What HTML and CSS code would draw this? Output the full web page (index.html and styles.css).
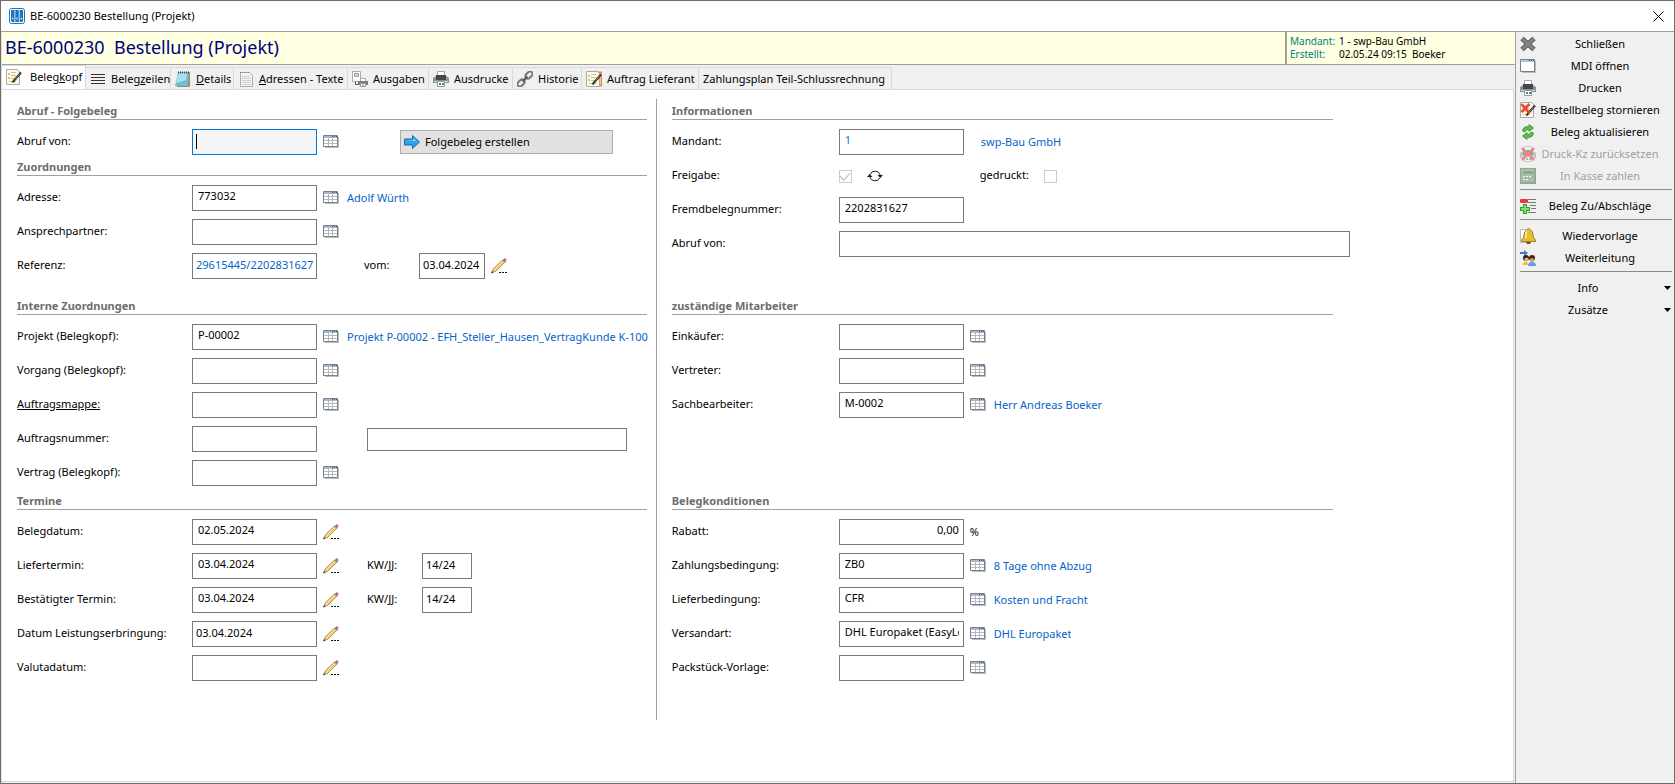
FILE: index.html
```
<!DOCTYPE html>
<html lang="de">
<head>
  <meta charset="UTF-8">
  <meta name="viewport" content="width=device-width, initial-scale=1.0">
  <title>BE-6000230 Bestellung (Projekt)</title>
  <link rel="stylesheet" href="styles.css">
</head>
<body>
  <!-- Symbole -->
  <svg class="symbols" aria-hidden="true">
    <symbol id="i-table" viewBox="0 0 16 14">
      <path d="M2 2h14v11H2z" fill="#b9bcc0"/>
      <path d="M.5.5h14v11H.5z" fill="#fff" stroke="#788088"/>
      <path d="M1 1h13v2H1z" fill="#a9b8cf"/>
      <path d="M9 1h1v1H9zM11 1h1v1h-1zM13 1h1v1h-1z" fill="#46536b"/>
      <path d="M1 5.500h13M1 8.500h13M5.500 3v8M9.500 3v8" stroke="#b5b9be"/>
    </symbol>
    <symbol id="i-pencil" viewBox="0 0 16 16">
      <path d="M1 14.500l1.200-3.500L11.500 2l2.300 2.300L4.500 13.500z" fill="#f0cf72" stroke="#8a6a3a" stroke-width=".7"/>
      <path d="M3 12L12 3.200" stroke="#fff0a8" stroke-width=".8"/>
      <path d="M11.300 2.200l1-1 2.500 2.500-1 1z" fill="#5f9276"/>
      <path d="M12.300 1.200l.9-.8q.6-.4 1.200.2l.9.900q.5.600 0 1.100l-.8.900z" fill="#cf5a60"/>
      <path d="M0 15.500l1-2.500 1.500 1.500z" fill="#333"/>
      <path d="M8 14h2v1H8zM11 14h2v1h-2zM14 14h2v1h-2z" fill="#111"/>
    </symbol>
    <symbol id="i-print" viewBox="0 0 16 16">
      <path d="M4.500.5h7v6h-7z" fill="#fff" stroke="#a5a5a5"/>
      <path d="M0 7l3-2h10l3 2v5H0z" fill="#8d9195"/>
      <path d="M3 4h10v5H3z" fill="#44484c"/>
      <path d="M1 10h14v1H1z" fill="#d5d8da"/>
      <path d="M4.500 10.500h7v5h-7z" fill="#fff" stroke="#999"/>
      <path d="M6 12h2v2H6z" fill="#2c86c5"/><path d="M9 12h2v2H9z" fill="#3a9a63"/>
    </symbol>
    <symbol id="i-note" viewBox="0 0 16 16">
      <path d="M.5.500h11l2 2v13H.5z" fill="#fbfaf1" stroke="#aaa"/>
      <path d="M2 4h2v2H2zM5 3h5v1H5zM5 6h5v1H5zM2 8h2v2H2zM5 9h4v1H5zM3 12h7v1H3z" fill="#d9c45d"/>
      <path d="M15 3.500L8.500 11l-2 2.500" fill="none" stroke="#2b2b2b" stroke-width="2"/>
      <path d="M14 4.500L9 10.300" stroke="#999" stroke-width=".7"/>
    </symbol>
  </svg>

  <div class="window">
    <header class="titlebar">
      <svg class="app-icon" viewBox="0 0 16 16"><rect x=".5" y=".5" width="15" height="15" rx="2" fill="#fff" stroke="#1c75bc"/><path d="M2 2h3.500v12H3l-1-1zM6.300 2h3.500v12H6.300zM10.600 2H14v11l-1 1h-2.400z" fill="#1c75bc"/><path d="M3.700 9.500v2M8 9.500v2M12.300 9.500v2" stroke="#fff"/></svg>
      <span>BE-6000230 Bestellung (Projekt)</span>
      <button type="button" class="close" aria-label="Fenster schließen"><svg viewBox="0 0 11 11"><path d="M.5.5l10 10M10.500.5l-10 10" stroke="#000" fill="none"/></svg></button>
    </header>

    <div class="workspace">
      <main class="main">
        <div class="doc-head">
          <h1>BE-6000230&nbsp; Bestellung (Projekt)</h1>
          <dl>
            <dt>Mandant:</dt><dd>1 - swp-Bau GmbH</dd>
            <dt>Erstellt:</dt><dd>02.05.24 09:15&nbsp; Boeker</dd>
          </dl>
        </div>

        <nav class="tabs">
          <button type="button" class="tab active"><svg class="icon"><use href="#i-note"/></svg><span>Beleg<u>k</u>opf</span></button>
          <button type="button" class="tab tab-zeilen"><svg class="icon" viewBox="0 0 16 16"><path d="M1 3.500h14M1 6.500h14M1 9.500h14M1 12.500h14" stroke="#333"/></svg><span>Beleg<u>z</u>eilen</span></button>
          <button type="button" class="tab tab-details"><svg class="icon" viewBox="0 0 16 16"><path d="M3 1h12v14l-1 1H2z" fill="#9a8d6b"/><path d="M3 1h11l-1 14H0z" fill="#6fc0cf"/><path d="M3 2h9l-1 7L1 12z" fill="#aee0e8"/><path d="M3 1.500h11" stroke="#445" stroke-dasharray="1 1" stroke-width="2"/></svg><span><u>D</u>etails</span></button>
          <button type="button" class="tab tab-adressen"><svg class="icon" viewBox="0 0 16 16"><path d="M2.500 1.500h9l3 3v11h-12z" fill="#f6f6f6" stroke="#aaa"/><path d="M4 5.500h8M4 7.500h9M4 9.500h9M4 11.500h9M4 13.500h9" stroke="#ccc"/><path d="M2 1.500h10" stroke="#888" stroke-dasharray="1 1"/></svg><span><u>A</u>dressen - Texte</span></button>
          <button type="button" class="tab tab-ausgaben"><svg class="icon" viewBox="0 0 16 16"><path d="M.5.5h8v10h-8z" fill="#fff" stroke="#aaa"/><path d="M2.500 2.500h4v3h-4z" fill="#c9dcf0" stroke="#8a9fb5"/><path d="M3.500 11v2.500H6" fill="none" stroke="#555"/><path d="M8.500 7.500h5v3h-5z" fill="#fff" stroke="#aaa"/><path d="M6 10h10v4H6z" fill="#777c80"/><path d="M8.500 12.500h5v3h-5z" fill="#fff" stroke="#999"/><path d="M10 13.500h2v1h-2z" fill="#2c86c5"/></svg><span>Ausgaben</span></button>
          <button type="button" class="tab tab-ausdrucke"><svg class="icon"><use href="#i-print"/></svg><span>Ausdrucke</span></button>
          <button type="button" class="tab tab-historie"><svg class="icon" viewBox="0 0 16 16" fill="none" stroke="#777" stroke-width="2"><rect x="8" y="1.500" width="8" height="5" rx="2.500" transform="rotate(-45 12 4)"/><rect x="0" y="9.500" width="8" height="5" rx="2.500" transform="rotate(-45 4 12)"/><path d="M5.500 10.500l5-5" stroke="#555"/></svg><span>Historie</span></button>
          <button type="button" class="tab tab-auftrag"><svg class="icon" viewBox="0 0 16 16"><path d="M9 1.500h6.500v13H9" fill="#fff" stroke="#e98c32" stroke-width="2"/><use href="#i-note"/></svg><span>Auftrag Lieferant</span></button>
          <button type="button" class="tab tab-plan"><span>Zahlungsplan Teil-Schlussrechnung</span></button>
        </nav>

        <form class="form">
          <div class="cell left top">
            <h2>Abruf - Folgebeleg</h2>
            <div class="rows">
              <div class="row">
                <label for="abruf">Abruf von:</label>
                <input type="text" id="abruf" class="field focus">
                <button type="button" class="pick" aria-label="Abruf wählen"><svg><use href="#i-table"/></svg></button>
                <button type="button" class="action"><svg class="icon" viewBox="0 0 16 16"><path d="M.5 5h8V1.500L15.500 8 8.500 14.500V11h-8z" fill="#2ba3ea" stroke="#1b6fae"/><path d="M1.500 6h8V4l3.500 3.500z" fill="#7fd0fa"/></svg>Folgebeleg erstellen</button>
              </div>
            </div>
            <h2>Zuordnungen</h2>
            <div class="rows">
              <div class="row">
                <label for="adresse">Adresse:</label>
                <input type="text" id="adresse" class="field" value="773032">
                <button type="button" class="pick" aria-label="Adresse wählen"><svg><use href="#i-table"/></svg></button>
                <a href="#">Adolf Würth</a>
              </div>
              <div class="row">
                <label for="ansprech">Ansprechpartner:</label>
                <input type="text" id="ansprech" class="field">
                <button type="button" class="pick" aria-label="Ansprechpartner wählen"><svg><use href="#i-table"/></svg></button>
              </div>
              <div class="row">
                <label for="referenz">Referenz:</label>
                <input type="text" id="referenz" class="field tight blue" value="29615445/2202831627">
                <label for="vom" class="sub sub-vom">vom:</label>
                <input type="text" id="vom" class="field tight date" value="03.04.2024">
                <button type="button" class="pick" aria-label="Datum ändern"><svg class="pencil"><use href="#i-pencil"/></svg></button>
              </div>
            </div>
          </div>

          <div class="cell right top">
            <h2>Informationen</h2>
            <div class="rows">
              <div class="row">
                <label for="mandant">Mandant:</label>
                <input type="text" id="mandant" class="field indigo" value="1">
                <a href="#" class="far">swp-Bau GmbH</a>
              </div>
              <div class="row">
                <label for="freigabe">Freigabe:</label>
                <input type="checkbox" id="freigabe" checked disabled>
                <button type="button" class="refresh" aria-label="Freigabe aktualisieren"><svg viewBox="0 0 16 14" fill="none" stroke="#222"><path d="M3 5.500A5.500 5.500 0 0 1 13.300 6M13 8.500A5.500 5.500 0 0 1 2.700 8"/><path d="M10.500 6h5.500l-2.700 3zM0 8h5.500L2.700 5z" fill="#222" stroke="none"/></svg></button>
                <label for="gedruckt" class="sub sub-gedruckt">gedruckt:</label>
                <input type="checkbox" id="gedruckt" disabled>
              </div>
              <div class="row">
                <label for="fremd">Fremdbelegnummer:</label>
                <input type="text" id="fremd" class="field" value="2202831627">
              </div>
              <div class="row">
                <label for="abruf2">Abruf von:</label>
                <input type="text" id="abruf2" class="field wide">
              </div>
            </div>
          </div>

          <div class="cell left middle">
            <h2>Interne Zuordnungen</h2>
            <div class="rows">
              <div class="row">
                <label for="projekt">Projekt (Belegkopf):</label>
                <input type="text" id="projekt" class="field" value="P-00002">
                <button type="button" class="pick" aria-label="Projekt wählen"><svg><use href="#i-table"/></svg></button>
                <a href="#">Projekt P-00002 - EFH_Steller_Hausen_VertragKunde K-100</a>
              </div>
              <div class="row">
                <label for="vorgang">Vorgang (Belegkopf):</label>
                <input type="text" id="vorgang" class="field">
                <button type="button" class="pick" aria-label="Vorgang wählen"><svg><use href="#i-table"/></svg></button>
              </div>
              <div class="row">
                <label for="mappe"><u>Auftragsmappe:</u></label>
                <input type="text" id="mappe" class="field">
                <button type="button" class="pick" aria-label="Auftragsmappe wählen"><svg><use href="#i-table"/></svg></button>
              </div>
              <div class="row">
                <label for="nummer">Auftragsnummer:</label>
                <input type="text" id="nummer" class="field">
                <input type="text" class="field extra" aria-label="Auftragsbezeichnung">
              </div>
              <div class="row">
                <label for="vertrag">Vertrag (Belegkopf):</label>
                <input type="text" id="vertrag" class="field">
                <button type="button" class="pick" aria-label="Vertrag wählen"><svg><use href="#i-table"/></svg></button>
              </div>
            </div>
          </div>

          <div class="cell right middle">
            <h2>zuständige Mitarbeiter</h2>
            <div class="rows">
              <div class="row">
                <label for="einkauf">Einkäufer:</label>
                <input type="text" id="einkauf" class="field">
                <button type="button" class="pick" aria-label="Einkäufer wählen"><svg><use href="#i-table"/></svg></button>
              </div>
              <div class="row">
                <label for="vertreter">Vertreter:</label>
                <input type="text" id="vertreter" class="field">
                <button type="button" class="pick" aria-label="Vertreter wählen"><svg><use href="#i-table"/></svg></button>
              </div>
              <div class="row">
                <label for="sachb">Sachbearbeiter:</label>
                <input type="text" id="sachb" class="field" value="M-0002">
                <button type="button" class="pick" aria-label="Sachbearbeiter wählen"><svg><use href="#i-table"/></svg></button>
                <a href="#">Herr Andreas Boeker</a>
              </div>
            </div>
          </div>

          <div class="cell left bottom">
            <h2>Termine</h2>
            <div class="rows">
              <div class="row">
                <label for="belegdatum">Belegdatum:</label>
                <input type="text" id="belegdatum" class="field" value="02.05.2024">
                <button type="button" class="pick" aria-label="Belegdatum ändern"><svg class="pencil"><use href="#i-pencil"/></svg></button>
              </div>
              <div class="row">
                <label for="liefer">Liefertermin:</label>
                <input type="text" id="liefer" class="field" value="03.04.2024">
                <button type="button" class="pick" aria-label="Liefertermin ändern"><svg class="pencil"><use href="#i-pencil"/></svg></button>
                <label for="kw1" class="sub sub-kw">KW/JJ:</label>
                <input type="text" id="kw1" class="field tight kw" value="14/24">
              </div>
              <div class="row">
                <label for="bestaetigt">Bestätigter Termin:</label>
                <input type="text" id="bestaetigt" class="field" value="03.04.2024">
                <button type="button" class="pick" aria-label="Bestätigten Termin ändern"><svg class="pencil"><use href="#i-pencil"/></svg></button>
                <label for="kw2" class="sub sub-kw">KW/JJ:</label>
                <input type="text" id="kw2" class="field tight kw" value="14/24">
              </div>
              <div class="row">
                <label for="leistung">Datum Leistungserbringung:</label>
                <input type="text" id="leistung" class="field tight" value="03.04.2024">
                <button type="button" class="pick" aria-label="Leistungsdatum ändern"><svg class="pencil"><use href="#i-pencil"/></svg></button>
              </div>
              <div class="row">
                <label for="valuta">Valutadatum:</label>
                <input type="text" id="valuta" class="field">
                <button type="button" class="pick" aria-label="Valutadatum ändern"><svg class="pencil"><use href="#i-pencil"/></svg></button>
              </div>
            </div>
          </div>

          <div class="cell right bottom">
            <h2>Belegkonditionen</h2>
            <div class="rows">
              <div class="row">
                <label for="rabatt">Rabatt:</label>
                <input type="text" id="rabatt" class="field number" value="0,00">
                <span class="unit">%</span>
              </div>
              <div class="row">
                <label for="zahlung">Zahlungsbedingung:</label>
                <input type="text" id="zahlung" class="field" value="ZB0">
                <button type="button" class="pick" aria-label="Zahlungsbedingung wählen"><svg><use href="#i-table"/></svg></button>
                <a href="#">8 Tage ohne Abzug</a>
              </div>
              <div class="row">
                <label for="lieferbed">Lieferbedingung:</label>
                <input type="text" id="lieferbed" class="field" value="CFR">
                <button type="button" class="pick" aria-label="Lieferbedingung wählen"><svg><use href="#i-table"/></svg></button>
                <a href="#">Kosten und Fracht</a>
              </div>
              <div class="row">
                <label for="versand">Versandart:</label>
                <input type="text" id="versand" class="field" value="DHL Europaket (EasyLog)">
                <button type="button" class="pick" aria-label="Versandart wählen"><svg><use href="#i-table"/></svg></button>
                <a href="#">DHL Europaket</a>
              </div>
              <div class="row">
                <label for="pack">Packstück-Vorlage:</label>
                <input type="text" id="pack" class="field">
                <button type="button" class="pick" aria-label="Packstück-Vorlage wählen"><svg><use href="#i-table"/></svg></button>
              </div>
            </div>
          </div>
        </form>
      </main>

      <aside class="sidebar">
        <button type="button"><svg class="icon" viewBox="0 0 16 16"><path d="M2 2.500l12 11M14 2.500l-12 11" stroke="#555" stroke-width="5"/><path d="M2 2.500l12 11M14 2.500l-12 11" stroke="#858585" stroke-width="3"/></svg><span>Schließen</span></button>
        <button type="button"><svg class="icon" viewBox="0 0 16 16"><path d="M2 3h14v12H2z" fill="#b9bcc0"/><path d="M.5 1.500h14v12H.5z" fill="#fff" stroke="#788088"/><path d="M1 2h13v2H1z" fill="#b5c3d8"/><path d="M9 2h1v1H9zM11 2h1v1h-1zM13 2h1v1h-1z" fill="#46536b"/></svg><span>MDI öffnen</span></button>
        <button type="button"><svg class="icon"><use href="#i-print"/></svg><span>Drucken</span></button>
        <button type="button"><svg class="icon" viewBox="0 0 16 16"><use href="#i-note"/><path d="M1.500 2l8 9M9.500 2l-8 8" stroke="#e8472c" stroke-width="2.500"/></svg><span>Bestellbeleg stornieren</span></button>
        <button type="button"><svg class="icon" viewBox="0 0 16 16"><path d="M2.500 7Q3 2.500 8 2.500h1V.5l4.500 3.500L9 7.500v-2H8Q5.500 5.500 5 8z" fill="#55c43d" stroke="#28872a" stroke-width=".7"/><path d="M13.500 9Q13 13.500 8 13.500H7v2L2.500 12 7 8.500v2h1Q10.500 10.500 11 8z" fill="#55c43d" stroke="#28872a" stroke-width=".7"/></svg><span>Beleg aktualisieren</span></button>
        <button type="button" disabled><svg class="icon" viewBox="0 0 16 16"><use href="#i-print"/><path d="M2 2l12 12M14 2L2 14" stroke="#e02a1a" stroke-width="2.500"/></svg><span>Druck-Kz zurücksetzen</span></button>
        <button type="button" disabled><svg class="icon" viewBox="0 0 16 16"><path d="M0 0h16v16H0z" fill="#3f5b44"/><path d="M1 1h13v13H1z" fill="#5c9a60"/><path d="M3 3h10v3H3z" fill="#1f6f2a"/><path d="M3 8h2v1H3zM6 8h2v1H6zM9 8h2v1H9zM3 11h2v1H3zM6 11h2v1H6z" fill="#fff"/><path d="M12 8h1v1h-1zM9 11h2v1H9z" fill="#e33"/></svg><span>In Kasse zahlen</span></button>
        <hr>
        <button type="button"><svg class="icon" viewBox="0 0 16 16"><path d="M8 1.500h8M8 4.500h8M10 7.500h6M11 10.500h5M8 14.500h8" stroke="#777"/><rect y="1" width="8" height="4" rx="1" fill="#e8383d"/><path d="M3 6h4v3h3v4H7v3H3v-3H0V9h3z" fill="#2f9e35"/><path d="M4 7h2v3h3v2H6v3H4v-3H1v-2h3z" fill="#7fe070"/></svg><span>Beleg Zu/Abschläge</span></button>
        <hr>
        <button type="button"><svg class="icon" viewBox="0 0 16 16"><path d="M.5 1.500h5v13h-5z" fill="#fff" stroke="#bbb"/><path d="M7 1.500q1.500-2 3 0Q13 3 13 7q0 3 2.500 5v1.500H1.500V12Q4 10 4 7t3-5.500z" fill="#e8bd2f" stroke="#8a6914" stroke-width=".8"/><path d="M7 3Q5.500 5 6 10" stroke="#fff3a5" stroke-width="1.500" fill="none"/><path d="M6 14h5l-1 2H7z" fill="#7b4d17"/></svg><span>Wiedervorlage</span></button>
        <button type="button"><svg class="icon" viewBox="0 0 16 16"><path d="M0 2h4V0l4 3-4 3V4H0z" fill="#3b78d8"/><circle cx="6" cy="8" r="3" fill="#2b211c"/><circle cx="12" cy="8" r="3" fill="#3b2618"/><circle cx="6.500" cy="9.500" r="2" fill="#e3b080"/><circle cx="12" cy="10" r="2" fill="#d89b69"/><path d="M3 15q0-4 4-3l2 3z" fill="#f0c534"/><path d="M8 16q0-4 4-4t4 4z" fill="#5aa0e8"/></svg><span>Weiterleitung</span></button>
        <hr>
        <button type="button" class="more"><span>Info</span><svg class="caret" viewBox="0 0 7 4"><path d="M0 0h7L3.500 4z"/></svg></button>
        <button type="button" class="more"><span>Zusätze</span><svg class="caret" viewBox="0 0 7 4"><path d="M0 0h7L3.500 4z"/></svg></button>
      </aside>
    </div>
  </div>
</body>
</html>
```

FILE: styles.css
```
* {
  box-sizing: border-box;
}
body {
  margin: 0;
  font-family: "Noto Sans", "Open Sans", sans-serif;
  font-size: 11px;
  line-height: 16px;
  color: #000;
  background-color: #fff;
}
button, input {
  font: inherit;
  color: inherit;
}
button {
  padding: 0;
  border: none;
  background: none;
}
a {
  color: #0563c9;
  text-decoration: none;
}
.symbols {
  display: none;
}
.icon {
  width: 16px;
  height: 16px;
  flex: none;
}

/* Fenster */
.window {
  display: flex;
  flex-direction: column;
  min-height: 100vh;
  border: 1px solid #6e6e6e;
}
.titlebar {
  display: flex;
  align-items: center;
  height: 30px;
  padding: 0 10px 0 8px;
}
.app-icon {
  width: 16px;
  height: 16px;
  margin-right: 5px;
}
.close {
  display: flex;
  margin-left: auto;
}
.close svg {
  width: 11px;
  height: 11px;
}
.workspace {
  display: flex;
  flex: 1;
  border-top: 1px solid #a0a0a0;
}
.main {
  flex: 1;
  min-width: 0;
  display: flex;
  flex-direction: column;
  background-color: #f0f0f0;
  border-left: 1px solid #ddd;
}

/* Belegkopf */
.doc-head {
  display: flex;
  height: 33px;
  background-color: #ffffe1;
  border-bottom: 1px solid #a0a0a0;
}
h1 {
  flex: 1;
  margin: 0;
  padding-left: 3px;
  font-size: 18px;
  font-weight: normal;
  line-height: 31px;
  color: #000080;
}
dl {
  display: grid;
  grid-template-columns: 49px 1fr;
  grid-auto-rows: 13px;
  width: 230px;
  margin: 0;
  padding: 3px 0 0 3px;
  border-left: 2px solid #a0a0a0;
  font-size: 10px;
  line-height: 13px;
}
dt {
  color: #008080;
}
dd {
  margin: 0;
}

/* Reiter */
.tabs {
  display: flex;
  align-items: flex-end;
  height: 24px;
}
.tab {
  display: flex;
  align-items: center;
  gap: 5px;
  height: 22px;
  padding-left: 4px;
  border: 1px solid #d9d9d9;
  border-width: 1px 1px 0 0;
  white-space: nowrap;
}
.tab.active {
  width: 84px;
  height: 24px;
  gap: 8px;
  padding-bottom: 2px;
  background-color: #fff;
}
.tab-zeilen { width: 85px; }
.tab-details { width: 63px; }
.tab-adressen { width: 114px; }
.tab-ausgaben { width: 81px; }
.tab-ausdrucke { width: 84px; }
.tab-historie { width: 69px; }
.tab-auftrag { width: 117px; }
.tab-plan { width: 193px; }

/* Formular */
.form {
  flex: 1;
  display: grid;
  grid-template-columns: 13fr 17fr;
  align-content: start;
  margin: 0 1px 1px 0;
  padding-top: 9px;
  background-color: #fff;
  border: 1px solid #d9d9d9;
  border-left: none;
}
.cell {
  min-width: 0;
}
.top {
  padding-bottom: 15px;
}
.middle {
  padding-bottom: 3px;
}
.bottom {
  padding-bottom: 39px;
}
.left {
  padding-left: 15px;
  border-right: 1px solid #a0a0a0;
}
.right {
  padding-left: 15px;
  padding-right: 163px;
}
h2 {
  height: 21px;
  margin: 0 9px 0 0;
  padding-top: 4px;
  border-bottom: 1px solid #a0a0a0;
  font-size: 11px;
  line-height: 16px;
  color: #6d6d6d;
}
.right h2 {
  margin-right: 17px;
}
.rows {
  display: flex;
  flex-direction: column;
  gap: 8px;
  padding-top: 9px;
}
.row {
  display: flex;
  align-items: center;
  height: 26px;
  white-space: nowrap;
}
.left .row {
  padding-right: 4px;
}
.row label {
  flex: none;
  width: 175px;
  padding-bottom: 2px;
}
.right .row label {
  width: 167px;
}
.row a {
  margin-left: 8px;
  overflow: hidden;
}
.row a.far {
  margin-left: 17px;
}
.field {
  flex: none;
  width: 125px;
  height: 26px;
  padding: 0 4px 6px 5px;
  border: 1px solid #7a7a7a;
  border-radius: 0;
  background-color: #fff;
  outline: none;
}
.field.tight {
  padding: 0 0 4px 3px;
}
.field.focus {
  border-color: #0078d7;
  background: linear-gradient(#000, #000) 3px 4px / 1px 15px no-repeat #f5f5f5;
}
.field.blue {
  color: #0563c9;
}
.field.indigo {
  color: #3a5fe0;
}
.field.number {
  text-align: right;
}
.field.date {
  width: 66px;
}
.field.kw {
  width: 50px;
}
.field.extra {
  width: 260px;
  height: 23px;
  margin-left: 50px;
}
.field.wide {
  flex: 1;
  width: auto;
}
.row label.sub {
  width: 55px;
}
.row label.sub-vom {
  margin-left: 47px;
}
.row label.sub-kw {
  margin-left: 28px;
}
.right .row label.sub-gedruckt {
  width: 64px;
  margin-left: 97px;
}
.pick, .refresh {
  display: flex;
  flex: none;
  margin-left: 6px;
}
.refresh {
  margin-left: 15px;
}
.pick svg, .refresh svg {
  width: 16px;
  height: 14px;
}
.pick svg.pencil {
  height: 16px;
}
.unit {
  margin-left: 6px;
}
.action {
  display: flex;
  align-items: center;
  gap: 5px;
  width: 213px;
  height: 24px;
  margin-left: 61px;
  padding-left: 3px;
  background-color: #e1e1e1;
  border: 1px solid #adadad;
}
input[type="checkbox"] {
  appearance: none;
  display: grid;
  place-items: center;
  width: 13px;
  height: 13px;
  margin: 0;
  border: 1px solid #ccc;
}
input[type="checkbox"]:checked::before {
  content: "";
  width: 9px;
  height: 5px;
  margin-bottom: 3px;
  border: solid #b5b5b5;
  border-width: 0 0 1px 1px;
  transform: rotate(-45deg);
}

/* Seitenleiste */
.sidebar {
  display: flex;
  flex-direction: column;
  width: 159px;
  padding: 1px 2px 0 4px;
  background-color: #f0f0f0;
  border-left: 1px solid #a0a0a0;
}
.sidebar button {
  display: flex;
  align-items: center;
  height: 22px;
  white-space: nowrap;
}
.sidebar span {
  flex: 1;
  padding-right: 8px;
  text-align: center;
}
.sidebar button:disabled {
  color: #a0a0a0;
}
.sidebar button:disabled svg {
  opacity: .5;
}
.sidebar hr {
  width: 100%;
  height: 1px;
  margin: 2px 0 5px;
  border: none;
  background-color: #8a8a8a;
}
.caret {
  width: 7px;
  height: 4px;
}
.sidebar .more {
  padding-right: 1px;
}
```
